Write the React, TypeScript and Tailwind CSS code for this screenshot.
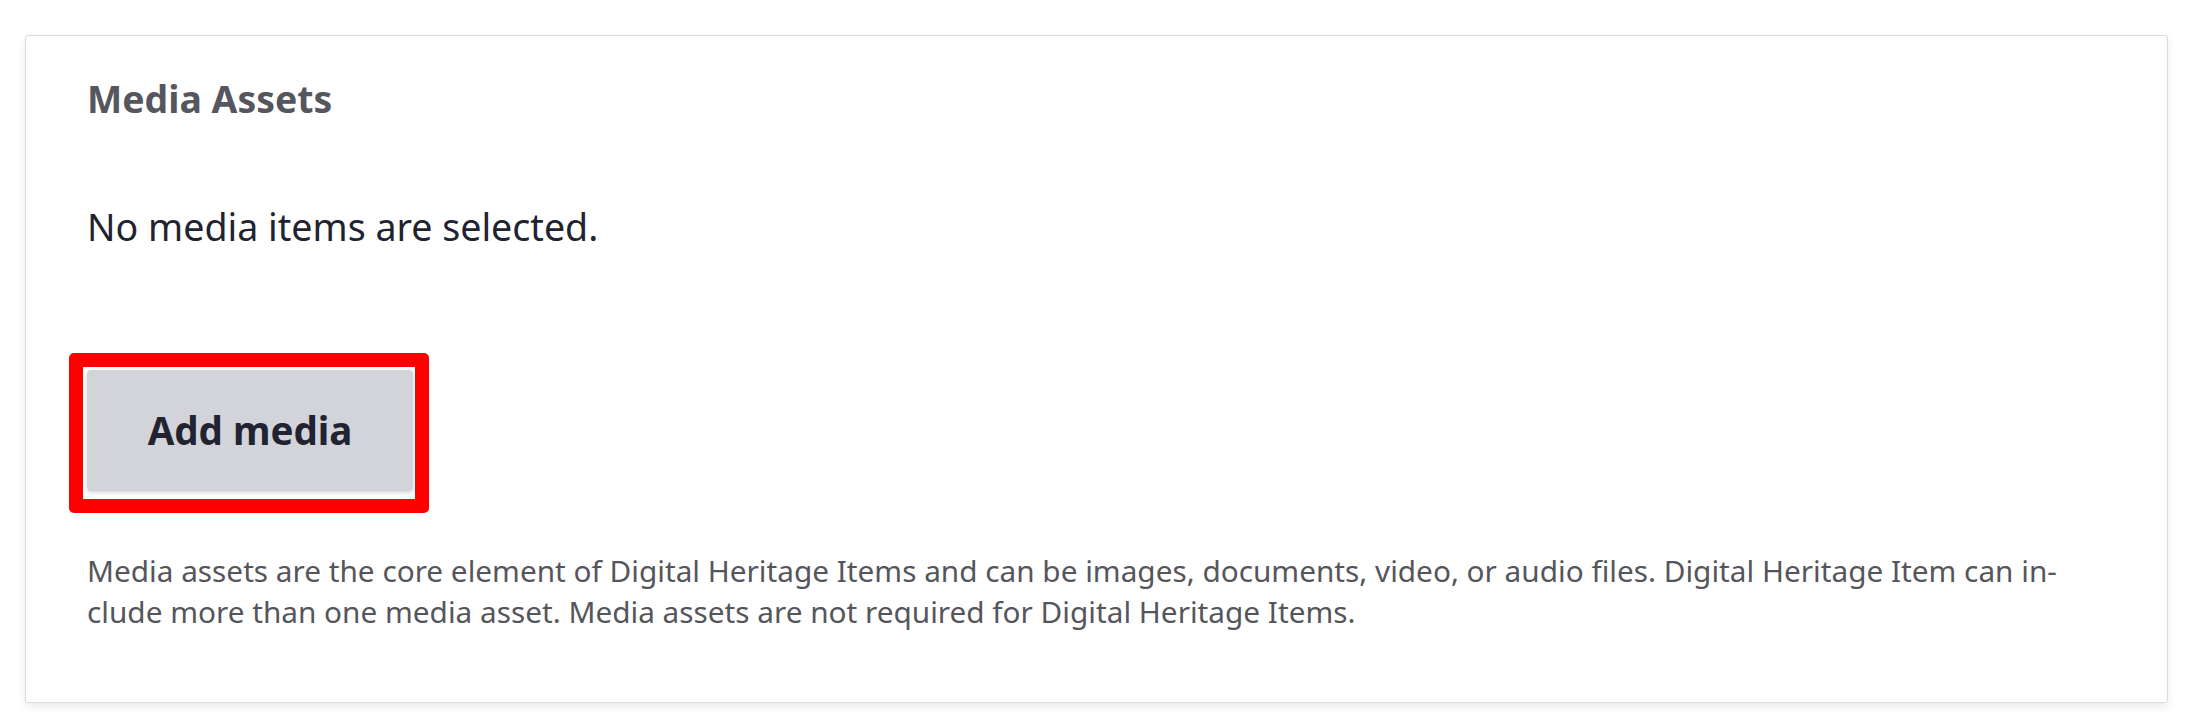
import React from "react";

export default function App() {
  return (
    <div className="min-h-screen bg-white pt-[35px] font-['Noto_Sans',sans-serif]">
      {/* media assets card */}
      <div className="ml-[25px] mr-[29px] rounded-[3px] border border-[#d9d9e1] bg-white pl-[61px] pr-[62px] pt-[40px] pb-[70px] shadow-[0_4px_10px_rgba(0,0,0,0.08)]">
        <h2 className="text-[37.4px] leading-[46px] font-bold text-[#55565e]">
          Media Assets
        </h2>
        <p className="mt-[83px] text-[37.6px] leading-[44px] text-[#222330]">
          No media items are selected.
        </p>
        <div className="relative mt-[121px] w-[326px]">
          <button className="flex h-[121px] w-[326px] items-center justify-center rounded-[4px] bg-[#d3d4d9] text-[38.5px] font-bold text-[#222330] shadow-[0_2px_4px_rgba(0,0,0,0.15)]">
            Add media
          </button>
          {/* highlight */}
          <div className="pointer-events-none absolute -left-[18px] -top-[17px] -right-[16px] -bottom-[22px] rounded-[5px] border-[14px] border-[#ff0000]" />
        </div>
        <p className="mt-[59px] text-[29.75px] leading-[41px] text-[#55565b]">
          Media assets are the core element of Digital Heritage Items and can be
          images, documents, video, or audio files. Digital Heritage Item can in-
          <br />
          clude more than one media asset. Media assets are not required for
          Digital Heritage Items.
        </p>
      </div>
    </div>
  );
}
